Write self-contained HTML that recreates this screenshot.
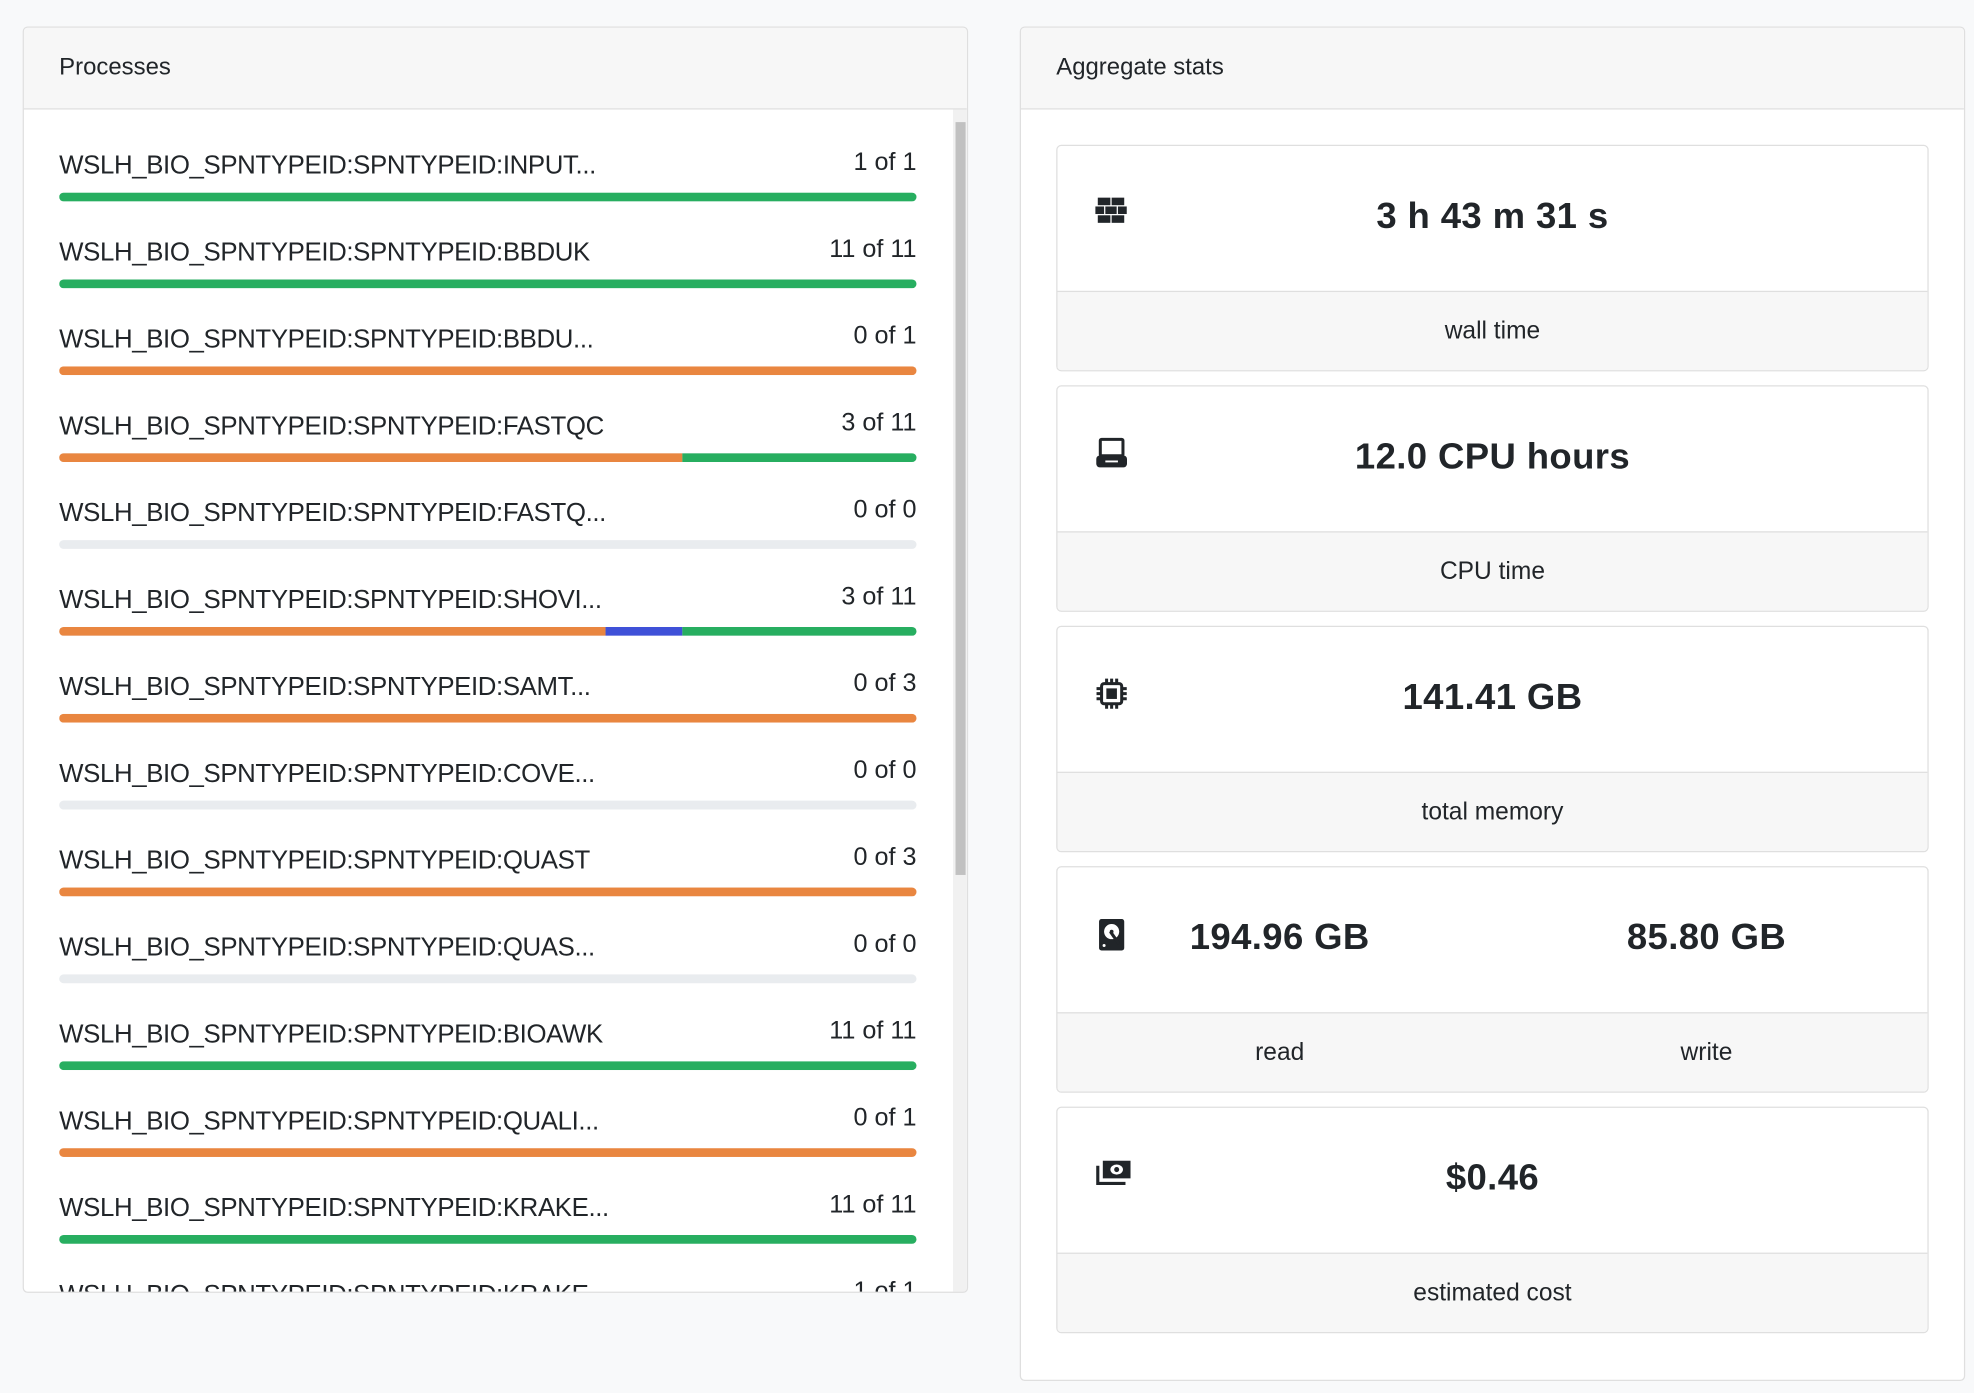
<!DOCTYPE html>
<html><head><meta charset="utf-8"><style>
html,body{margin:0;padding:0}
body{width:1974px;height:1393px;background:#f8f9fa;overflow:hidden;font-family:"Liberation Sans",sans-serif;color:#212529}
#w{position:absolute;left:0;top:0;width:1568px;height:1106px;transform:scale(1.25893);transform-origin:0 0}
.card{position:absolute;background:#fff;border:1px solid #dfdfdf;border-radius:4px;overflow:hidden;box-sizing:border-box}
.hd{position:absolute;left:0;right:0;top:0;height:64px;background:#f7f7f7;border-bottom:1px solid #dfdfdf;font-size:19px;line-height:64px;padding-left:28px}
.row{position:absolute;left:28px;width:681px;height:60px}
.nm{position:absolute;left:0;top:0;font-size:20.5px;letter-spacing:-0.3px;white-space:nowrap}
.ct{position:absolute;right:0;top:-2px;font-size:20px;letter-spacing:0}
.bar{position:absolute;left:0;right:0;top:33px;height:7px;border-radius:4px;overflow:hidden;background:#e9ecef;display:flex}
.g{background:#27ae60}.o{background:#e98640}.b{background:#3f51d8}
.sc{position:absolute;right:0;top:65px;bottom:0;width:11px;background:#f1f1f1}
.th{position:absolute;left:2px;right:1px;top:10px;height:598px;background:#c1c1c1}
.st{position:absolute;left:28px;width:693px;height:180px;border:1px solid #dfdfdf;border-radius:4px;overflow:hidden;box-sizing:border-box;background:#fff}
.st .ft{position:absolute;left:0;right:0;top:115px;bottom:0;background:#f7f7f7;border-top:1px solid #dfdfdf;font-size:19.5px;text-align:center;line-height:62px}
.val{position:absolute;top:40px;left:0;right:0;text-align:center;font-size:29px;font-weight:bold;letter-spacing:0.3px}
.ic{position:absolute;left:30px;top:40px}
</style></head><body><div id="w">
<div class="card" style="left:18px;top:21px;width:751px;height:1006px">
 <div class="hd">Processes</div>
 <div class="row" style="top:98px"><div class="nm">WSLH_BIO_SPNTYPEID:SPNTYPEID:INPUT...</div><div class="ct">1 of 1</div><div class="bar"><div class="g" style="flex:1"></div></div></div>
 <div class="row" style="top:167px"><div class="nm">WSLH_BIO_SPNTYPEID:SPNTYPEID:BBDUK</div><div class="ct">11 of 11</div><div class="bar"><div class="g" style="flex:1"></div></div></div>
 <div class="row" style="top:236px"><div class="nm">WSLH_BIO_SPNTYPEID:SPNTYPEID:BBDU...</div><div class="ct">0 of 1</div><div class="bar"><div class="o" style="flex:1"></div></div></div>
 <div class="row" style="top:305px"><div class="nm">WSLH_BIO_SPNTYPEID:SPNTYPEID:FASTQC</div><div class="ct">3 of 11</div><div class="bar"><div class="o" style="width:495px"></div><div class="g" style="flex:1"></div></div></div>
 <div class="row" style="top:374px"><div class="nm">WSLH_BIO_SPNTYPEID:SPNTYPEID:FASTQ...</div><div class="ct">0 of 0</div><div class="bar"></div></div>
 <div class="row" style="top:443px"><div class="nm">WSLH_BIO_SPNTYPEID:SPNTYPEID:SHOVI...</div><div class="ct">3 of 11</div><div class="bar"><div class="o" style="width:434px"></div><div class="b" style="width:61px"></div><div class="g" style="flex:1"></div></div></div>
 <div class="row" style="top:512px"><div class="nm">WSLH_BIO_SPNTYPEID:SPNTYPEID:SAMT...</div><div class="ct">0 of 3</div><div class="bar"><div class="o" style="flex:1"></div></div></div>
 <div class="row" style="top:581px"><div class="nm">WSLH_BIO_SPNTYPEID:SPNTYPEID:COVE...</div><div class="ct">0 of 0</div><div class="bar"></div></div>
 <div class="row" style="top:650px"><div class="nm">WSLH_BIO_SPNTYPEID:SPNTYPEID:QUAST</div><div class="ct">0 of 3</div><div class="bar"><div class="o" style="flex:1"></div></div></div>
 <div class="row" style="top:719px"><div class="nm">WSLH_BIO_SPNTYPEID:SPNTYPEID:QUAS...</div><div class="ct">0 of 0</div><div class="bar"></div></div>
 <div class="row" style="top:788px"><div class="nm">WSLH_BIO_SPNTYPEID:SPNTYPEID:BIOAWK</div><div class="ct">11 of 11</div><div class="bar"><div class="g" style="flex:1"></div></div></div>
 <div class="row" style="top:857px"><div class="nm">WSLH_BIO_SPNTYPEID:SPNTYPEID:QUALI...</div><div class="ct">0 of 1</div><div class="bar"><div class="o" style="flex:1"></div></div></div>
 <div class="row" style="top:926px"><div class="nm">WSLH_BIO_SPNTYPEID:SPNTYPEID:KRAKE...</div><div class="ct">11 of 11</div><div class="bar"><div class="g" style="flex:1"></div></div></div>
 <div class="row" style="top:995px"><div class="nm">WSLH_BIO_SPNTYPEID:SPNTYPEID:KRAKE...</div><div class="ct">1 of 1</div></div>
 <div class="sc"><div class="th"></div></div>
</div>
<div class="card" style="left:810px;top:21px;width:751px;height:1076px">
 <div class="hd">Aggregate stats</div>
 <div class="st" style="top:93px"><svg class="ic" width="26" height="24" viewBox="0 0 26 24" fill="#212529"><rect x="2" y="1" width="10" height="6"/><rect x="13" y="1" width="10" height="6"/><rect x="0" y="8" width="7" height="6"/><rect x="8" y="8" width="9" height="6"/><rect x="18" y="8" width="7" height="6"/><rect x="2" y="15" width="10" height="6"/><rect x="13" y="15" width="10" height="6"/></svg><div class="val">3 h 43 m 31 s</div><div class="ft">wall time</div></div>
 <div class="st" style="top:284px"><svg class="ic" width="26" height="26" viewBox="0 0 26 26" fill="none" stroke="#212529" stroke-width="2.4"><rect x="4" y="2" width="18" height="13" rx="1"/><rect x="2" y="16" width="22" height="7" rx="1.5" fill="#212529"/><line x1="8" y1="19.5" x2="18" y2="19.5" stroke="#fff" stroke-width="1.5"/></svg><div class="val">12.0 CPU hours</div><div class="ft">CPU time</div></div>
 <div class="st" style="top:475px"><svg class="ic" width="26" height="26" viewBox="0 0 26 26" fill="none" stroke="#212529" stroke-width="2.4"><rect x="5" y="5" width="16" height="16" rx="2"/><rect x="10" y="10" width="6" height="6" fill="#212529"/><path d="M9 1v4M13 1v4M17 1v4M9 21v4M13 21v4M17 21v4M1 9h4M1 13h4M1 17h4M21 9h4M21 13h4M21 17h4"/></svg><div class="val">141.41 GB</div><div class="ft">total memory</div></div>
 <div class="st" style="top:666px"><svg class="ic" width="26" height="28" viewBox="0 0 26 28" fill="#212529"><rect x="3" y="1" width="20" height="25" rx="2"/><circle cx="13" cy="11" r="6" fill="#fff"/><circle cx="13" cy="11" r="1.5"/><path d="M12 11l7 10" stroke="#212529" stroke-width="2.5"/><circle cx="7" cy="22" r="1.2" fill="#fff"/></svg>
  <div class="val" style="left:7px;right:auto;width:339px">194.96 GB</div><div class="val" style="left:346px;right:auto;width:339px">85.80 GB</div>
  <div class="ft"><span style="position:absolute;left:7px;width:339px">read</span><span style="position:absolute;left:346px;width:339px">write</span></div></div>
 <div class="st" style="top:857px"><svg class="ic" width="30" height="24" viewBox="0 0 30 24" fill="#212529"><rect x="6" y="2" width="22" height="14"/><ellipse cx="17" cy="9" rx="5" ry="4" fill="#fff"/><circle cx="17" cy="9" r="2"/><path d="M2 6v14h22" fill="none" stroke="#212529" stroke-width="2.5"/></svg><div class="val">$0.46</div><div class="ft">estimated cost</div></div>
</div>
</div></body></html>
